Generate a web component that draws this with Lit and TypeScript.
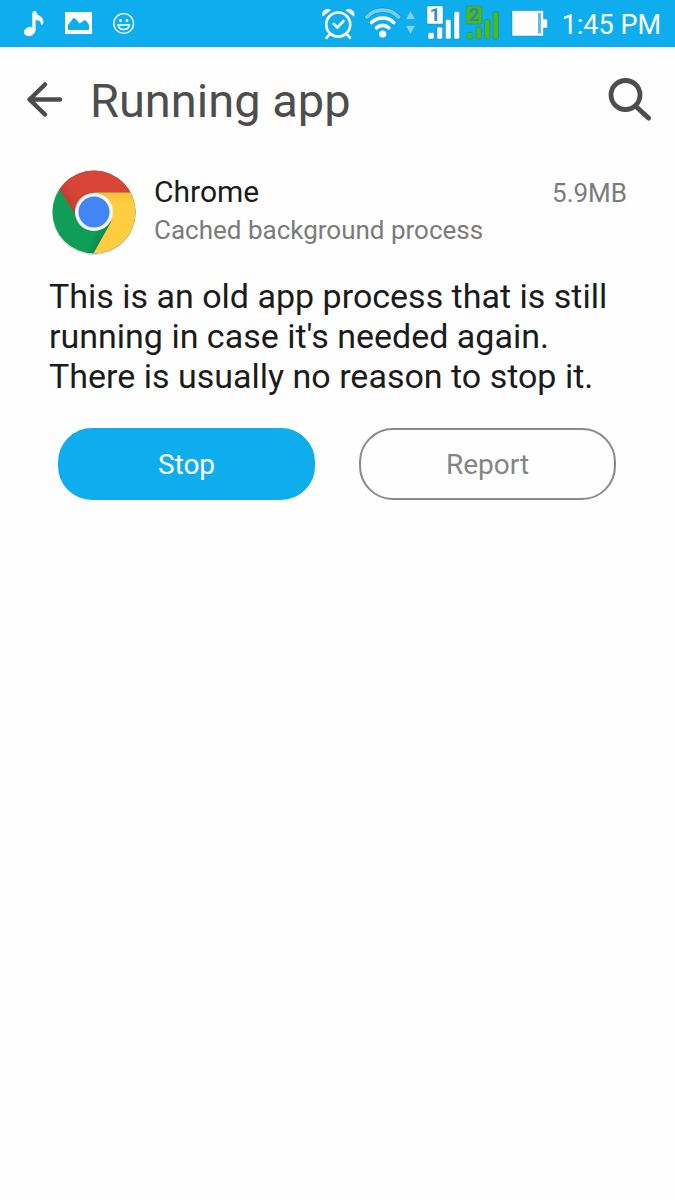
import { LitElement, html, svg, css } from "lit";
import { customElement, property } from "lit/decorators.js";

@customElement("status-bar")
class StatusBar extends LitElement {
  static styles = css`
    :host {
      display: flex;
      justify-content: space-between;
      height: 47px;
      padding: 0 14px 0 24px;
      background: #0eaeee;
      color: #fff;
      font-size: 27px;
      line-height: 50px;
    }
    svg { display: block; flex: none; }
    .group { display: flex; }
    .notifications { gap: 21px; }
    .system { gap: 4px; }
    .arrows { margin: 0 5px 0 -2px; }
    .battery { margin-left: 7px; }
    .alarm { margin-right: 5px; }
    .time { margin-left: 10px; white-space: nowrap; }
    .digit { font-size: 19px; font-weight: 700; }
  `;

  private signal(digit: string, fill: string, ink: string) {
    return html`<svg width="35" height="47" viewBox="0 0 35 47" role="img" aria-label="SIM ${digit} signal">
      ${svg`<g fill=${fill} stroke="#087eb2" stroke-opacity=".4" stroke-width="1">
        <rect x="1" y="6" width="16" height="18" rx="1"/>
        <rect x="2" y="32.500" width="6" height="6.500" rx="1.500"/>
        <rect x="11" y="27" width="5.500" height="12" rx="1.500"/>
        <rect x="19.500" y="19.500" width="5.500" height="19.500" rx="1.500"/>
        <rect x="28" y="11.500" width="5.500" height="27.500" rx="1.500"/>
      </g>
      <text class="digit" x="9" y="21" text-anchor="middle" fill=${ink}>${digit}</text>`}
    </svg>`;
  }

  render() {
    return html`
      <div class="group notifications">
        <svg width="20" height="47" viewBox="24 0 20 47" role="img" aria-label="Music">
          <ellipse cx="29.500" cy="31.500" rx="5.700" ry="4.500" transform="rotate(-18 29.500 31.500)" fill="#fff"/>
          <path d="M32.300 31V13.500Q32.300 11 34.500 11H36Q37 15 40.500 16.500Q44 18.500 43.300 23Q42.500 25.500 40.800 24.300Q41.500 20.500 35.600 20V31Z" fill="#fff"/>
        </svg>
        <svg width="27" height="47" viewBox="65 0 27 47" role="img" aria-label="Screenshot">
          <path fill="#fff" fill-rule="evenodd" d="M65 12H92V34H65ZM68 30H89V25Q86 19.500 84 20.500L79.500 23.500Q74 16.500 73 18.500L68 25Z"/>
        </svg>
        <svg width="22" height="47" viewBox="113 0 22 47" role="img" aria-label="Smile">
          <circle cx="123.700" cy="23.500" r="9.900" fill="none" stroke="#fff" stroke-width="1.400"/>
          <circle cx="120.500" cy="20.500" r="1.400" fill="#fff"/>
          <circle cx="127" cy="20.500" r="1.400" fill="#fff"/>
          <path d="M118 25H129.500Q128.500 29.500 123.700 29.500T118 25Z" fill="none" stroke="#fff" stroke-width="1.500"/>
        </svg>
      </div>
      <div class="group system">
        <svg class="alarm" width="34" height="47" viewBox="323 0 34 47" role="img" aria-label="Alarm">
          <g fill="none" stroke="#fff" stroke-width="2.600" stroke-linecap="round">
            <circle cx="340.200" cy="24.500" r="12"/>
            <path d="M335.800 24L339.500 27.500L345.500 21M331.500 34.500L328.500 37.800M349 34.500L352 37.800"/>
          </g>
          <path fill="#fff" d="M324.500 16.500Q323 12 326.500 10T333 10.200ZM356 16.500Q357.500 12 354 10T347.500 10.200Z"/>
        </svg>
        <svg class="wifi" width="38" height="47" viewBox="366 0 38 47" role="img" aria-label="Wi-Fi">
          <g fill="none" stroke-linecap="round">
            <path d="M368.800 17A22 22 0 0 1 400.600 17" stroke="#1593c8" stroke-width="5.200"/>
            <path d="M368.800 17A22 22 0 0 1 400.600 17" stroke="#6fd0f5" stroke-width="3.800"/>
            <path d="M373.600 22.500A16 16 0 0 1 395.800 22.500M378.600 27.800A8.800 8.800 0 0 1 390.800 27.800" stroke="#fff" stroke-width="3.600"/>
          </g>
          <circle cx="384.700" cy="34" r="3.600" fill="#fff"/>
        </svg>
        <svg class="arrows" width="13" height="47" viewBox="405 0 13 47" aria-hidden="true">
          <path d="M411.500 10.500L416.500 19.500H406.500ZM406.500 25.500H416.500L411.500 34.500Z" fill="#7ad6f8" stroke="#2aa3d3" stroke-width=".8"/>
        </svg>
        ${this.signal("1", "#ffffff", "#2a93c4")}
        ${this.signal("2", "#4cb81f", "#2590a0")}
        <svg class="battery" width="37" height="47" viewBox="511 0 37 47" role="img" aria-label="Battery">
          <path fill="#fff" stroke="#0787bd" stroke-opacity=".5" d="M512 10.500H543.500V19H547.500V28H543.500V36H512Z"/>
          <rect x="538" y="13" width="3" height="20.500" fill="#62bfe2"/>
        </svg>
        <span class="time">1:45 PM</span>
      </div>
    `;
  }
}

@customElement("chrome-logo")
class ChromeLogo extends LitElement {
  static styles = css`
    :host { display: block; flex: none; }
    svg { display: block; }
  `;
  render() {
    return html`<svg width="88" height="88" viewBox="-44 -44 88 88" role="img" aria-label="Chrome logo">
      <defs>
        <clipPath id="disc"><circle r="41.500"/></clipPath>
        <linearGradient id="red" gradientUnits="userSpaceOnUse" x1="-26" y1="-6" x2="-14" y2="-14">
          <stop offset="0" stop-color="#c23b30"/><stop offset="1" stop-color="#d84437"/>
        </linearGradient>
        <linearGradient id="yellow" gradientUnits="userSpaceOnUse" x1="0" y1="-20" x2="0" y2="-8">
          <stop offset="0" stop-color="#f3bd3c"/><stop offset="1" stop-color="#ffcd40"/>
        </linearGradient>
        <linearGradient id="green" gradientUnits="userSpaceOnUse" x1="12" y1="22" x2="2" y2="17">
          <stop offset="0" stop-color="#0c8449"/><stop offset="1" stop-color="#0f9d58"/>
        </linearGradient>
      </defs>
      <circle cy="1" r="42" fill="#000" opacity=".15"/>
      <g clip-path="url(#disc)">
        <rect x="-44" y="-44" width="88" height="88" fill="url(#green)"/>
        <path d="M-46 -44H44V-19.500H0L-17 5L-34 -22Z" fill="url(#red)"/>
        <path d="M0 -19.500H44V44H-2L17 10Z" fill="url(#yellow)"/>
      </g>
      <circle r="19" fill="#f6f6f6"/>
      <circle r="15.500" fill="#4285f4"/>
    </svg>`;
  }
}

@customElement("app-root")
class AppRoot extends LitElement {
  @property() name = "Chrome";
  @property() memory = "5.9MB";

  static styles = css`
    :host {
      display: block;
      min-height: 100vh;
      background: #fefefe;
      color: #1b1b1b;
      font-family: Roboto, "Liberation Sans", sans-serif;
    }
    button { font: inherit; margin: 0; cursor: pointer; }
    svg { display: block; }
    .toolbar {
      display: flex;
      align-items: center;
      height: 108px;
      padding: 0 20px;
      color: #4d4d4d;
    }
    .icon { padding: 0; border: 0; background: none; color: inherit; }
    h1 {
      flex: 1;
      margin: 0 0 0 20px;
      font-size: 47px;
      font-weight: 400;
      line-height: 56px;
    }
    .app {
      display: flex;
      gap: 16px;
      padding: 13px 48px 0 50px;
    }
    .info { flex: 1; padding-top: 5px; }
    h2 { margin: 0; font-size: 30px; font-weight: 400; line-height: 38px; }
    .muted { margin: 0; color: #7b7b7b; font-size: 26px; line-height: 38px; }
    .memory { padding-top: 6px; }
    .description {
      margin: 0;
      padding: 20px 49px 0;
      font-size: 34px;
      line-height: 40px;
    }
    .actions { display: flex; gap: 44px; padding: 32px 59px 32px 58px; }
    .action {
      flex: 1;
      height: 72px;
      padding: 0;
      border: 2px solid #0eaeee;
      border-radius: 34px;
      background: #0eaeee;
      color: #fff;
      font-size: 28px;
    }
    .outline { border-color: #8a8a8a; background: none; color: #858585; }
  `;

  render() {
    return html`
      <status-bar></status-bar>
      <header class="toolbar">
        <button class="icon" aria-label="Back">
          <svg width="50" height="50" viewBox="0 0 50 50" fill="none" stroke="currentColor" stroke-width="4.500" stroke-linecap="round" stroke-linejoin="round">
            <path d="M25 8.500L9.500 23.500L25 38.500M10 23.500H40"/>
          </svg>
        </button>
        <h1>Running app</h1>
        <button class="icon" aria-label="Search">
          <svg width="50" height="50" viewBox="0 0 50 50" fill="none" stroke="currentColor" stroke-linecap="round">
            <circle cx="20.500" cy="19" r="14.500" stroke-width="4.800"/>
            <path d="M31 30.500L43.500 42" stroke-width="5"/>
          </svg>
        </button>
      </header>
      <main>
        <section class="app">
          <chrome-logo></chrome-logo>
          <div class="info">
            <h2>${this.name}</h2>
            <p class="muted">Cached background process</p>
          </div>
          <p class="muted memory">${this.memory}</p>
        </section>
        <p class="description">
          This is an old app process that is still running in case it's needed
          again. There is usually no reason to stop it.
        </p>
        <div class="actions">
          <button class="action">Stop</button>
          <button class="action outline">Report</button>
        </div>
      </main>
    `;
  }
}
